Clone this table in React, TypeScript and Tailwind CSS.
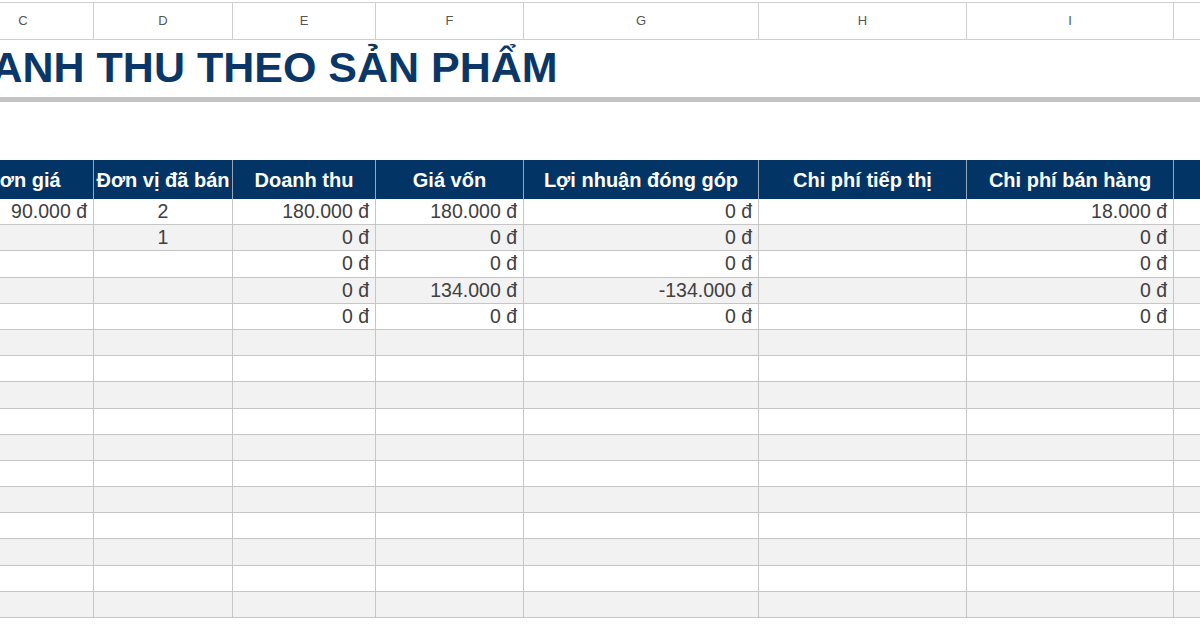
import React from 'react';

const cols = [
  { key: 'C', w: 'w-[141px]' },
  { key: 'D', w: 'w-[139px]' },
  { key: 'E', w: 'w-[143px]' },
  { key: 'F', w: 'w-[148px]' },
  { key: 'G', w: 'w-[235px]' },
  { key: 'H', w: 'w-[208px]' },
  { key: 'I', w: 'w-[207px]' },
  { key: 'J', w: 'w-[120px]' },
];

const headers = [
  'Đơn giá',
  'Đơn vị đã bán',
  'Doanh thu',
  'Giá vốn',
  'Lợi nhuận đóng góp',
  'Chi phí tiếp thị',
  'Chi phí bán hàng',
  '',
];

const data: string[][] = [
  ['90.000 đ', '2', '180.000 đ', '180.000 đ', '0 đ', '', '18.000 đ', ''],
  ['', '1', '0 đ', '0 đ', '0 đ', '', '0 đ', ''],
  ['', '', '0 đ', '0 đ', '0 đ', '', '0 đ', ''],
  ['', '', '0 đ', '134.000 đ', '-134.000 đ', '', '0 đ', ''],
  ['', '', '0 đ', '0 đ', '0 đ', '', '0 đ', ''],
];

const TOTAL_ROWS = 16;

export default function App() {
  const rows = Array.from({ length: TOTAL_ROWS }, (_, i) => data[i] ?? Array(8).fill(''));

  return (
    <div className="w-[1200px] h-[630px] overflow-hidden bg-white font-['Liberation_Sans',Arial,sans-serif]">
      <div className="ml-[-47px] w-[1341px]">
        {/* column letters */}
        <div className="mt-[2px] flex h-[38px] border-y border-[#cfcfcf]">
          {cols.map((c) => (
            <div
              key={c.key}
              className={`${c.w} shrink-0 border-r border-[#cfcfcf] flex items-center justify-center text-[13px] text-[#555]`}
            >
              {c.key}
            </div>
          ))}
        </div>

        {/* title */}
        <div className="h-[57px] flex items-end pb-[8px]">
          <h1 className="ml-[-26px] text-[43px] leading-none font-bold text-[#0a3767]">
            DOANH THU THEO SẢN PHẨM
          </h1>
        </div>
        <div className="h-[5px] bg-[#c4c4c4]" />

        <div className="h-[58px]" />

        {/* table header */}
        <div className="flex h-[39px] bg-[#033466]">
          {cols.map((c, i) => (
            <div
              key={c.key}
              className={`${c.w} shrink-0 border-r border-[#9aa7b8] flex items-center justify-center whitespace-nowrap text-[20px] font-bold text-white`}
            >
              {headers[i]}
            </div>
          ))}
        </div>

        {/* rows */}
        {rows.map((r, ri) => (
          <div
            key={ri}
            className={`flex h-[26.2px] border-b border-[#c6c6c6] ${ri % 2 === 1 ? 'bg-[#f2f2f2]' : 'bg-white'}`}
          >
            {cols.map((c, ci) => (
              <div
                key={c.key}
                className={`${c.w} shrink-0 border-r border-[#c6c6c6] flex items-center px-[6px] text-[19.5px] text-[#404040] ${
                  ci === 1 ? 'justify-center' : 'justify-end'
                }`}
              >
                {r[ci]}
              </div>
            ))}
          </div>
        ))}
      </div>
    </div>
  );
}
